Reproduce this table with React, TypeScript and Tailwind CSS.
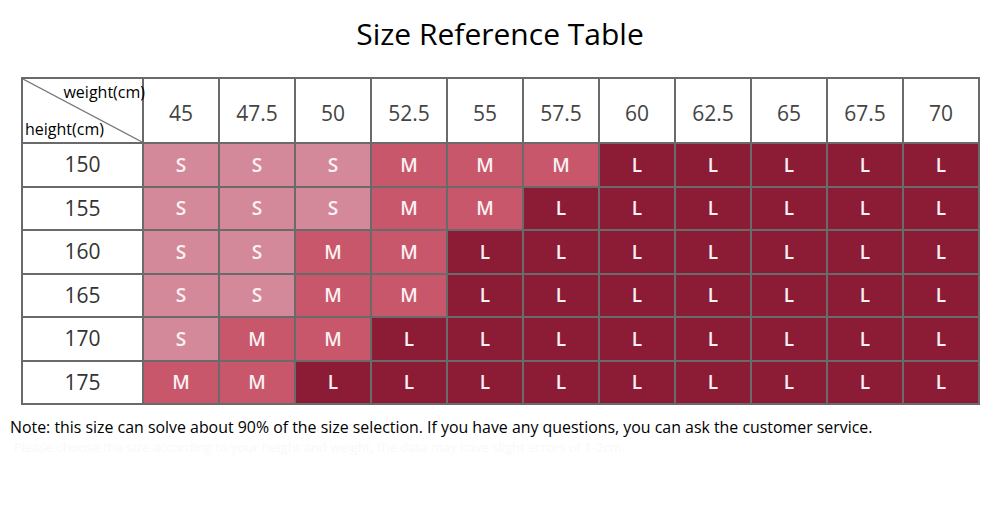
const weights = ["45", "47.5", "50", "52.5", "55", "57.5", "60", "62.5", "65", "67.5", "70"];

const rows: { height: string; sizes: string }[] = [
  { height: "150", sizes: "SSSMMMLLLLL" },
  { height: "155", sizes: "SSSMMLLLLLL" },
  { height: "160", sizes: "SSMMLLLLLLL" },
  { height: "165", sizes: "SSMMLLLLLLL" },
  { height: "170", sizes: "SMMLLLLLLLL" },
  { height: "175", sizes: "MMLLLLLLLLL" },
];

const sizeColor: Record<string, string> = {
  S: "bg-[#d4899a]",
  M: "bg-[#c8576c]",
  L: "bg-[#8c1b36]",
};

function SizeCell({ size }: { size: string }) {
  return (
    <div
      className={`flex items-center justify-center text-[19px] font-semibold text-[#fdf1f3] ${sizeColor[size]}`}
    >
      {size}
    </div>
  );
}

export default function App() {
  return (
    <div className="h-[506px] w-[1000px] overflow-hidden bg-white [font-family:'Open_Sans','Noto_Sans',sans-serif]">
      <h1 className="flex h-[77px] items-start justify-center pt-[14px] text-[30px] leading-[40px] text-black">
        Size Reference Table
      </h1>

      <div className="ml-[21px] grid w-[959px] grid-cols-[119px_repeat(11,74px)] grid-rows-[63px_repeat(6,41.5px)] gap-[2px] border-2 border-[#6a6a6a] bg-[#6a6a6a]">
        <div className="relative bg-white">
          <svg className="absolute inset-0 h-full w-full" viewBox="0 0 119 63" preserveAspectRatio="none">
            <line x1="0" y1="0" x2="119" y2="63" stroke="#777" strokeWidth="1.2" />
          </svg>
          <span className="absolute right-[-3px] top-[5px] text-[16px] leading-none text-black">weight(cm)</span>
          <span className="absolute bottom-[5px] left-[2px] text-[16px] leading-none text-black">height(cm)</span>
        </div>
        {weights.map((w) => (
          <div key={w} className="flex items-center justify-center bg-white pt-[6px] text-[21px] text-[#444]">
            {w}
          </div>
        ))}

        {rows.map((row) => (
          <div key={row.height} className="contents">
            <div className="flex items-center justify-center bg-white text-[21px] text-[#333]">{row.height}</div>
            {row.sizes.split("").map((s, i) => (
              <SizeCell key={i} size={s} />
            ))}
          </div>
        ))}
      </div>

      <p className="ml-[10px] mt-[10px] text-[15.9px] leading-[24px] text-black">
        Note: this size can solve about 90% of the size selection. If you have any questions, you can ask the customer service.
      </p>
      <p className="ml-[14px] text-[13px] leading-[16px] text-[#f9f9f9]">
        Please choose the size according to your height and weight, the data may have slight errors of 1-2cm.
      </p>
    </div>
  );
}
